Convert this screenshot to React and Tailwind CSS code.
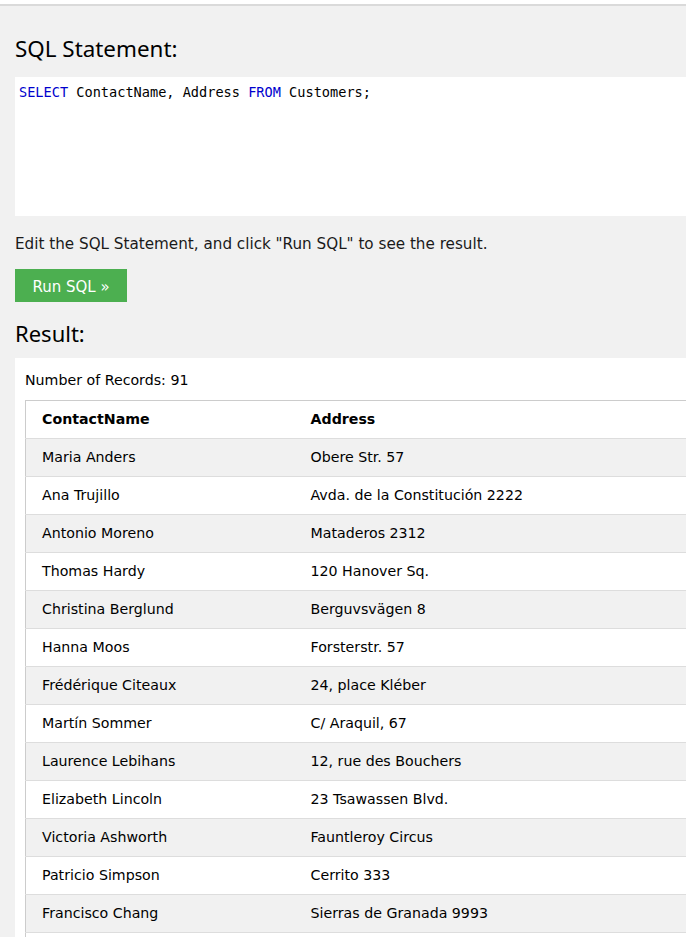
import React from "react";

const rows = [
    ["Maria Anders", "Obere Str. 57"],
    ["Ana Trujillo", "Avda. de la Constitución 2222"],
    ["Antonio Moreno", "Mataderos 2312"],
    ["Thomas Hardy", "120 Hanover Sq."],
    ["Christina Berglund", "Berguvsvägen 8"],
    ["Hanna Moos", "Forsterstr. 57"],
    ["Frédérique Citeaux", "24, place Kléber"],
    ["Martín Sommer", "C/ Araquil, 67"],
    ["Laurence Lebihans", "12, rue des Bouchers"],
    ["Elizabeth Lincoln", "23 Tsawassen Blvd."],
    ["Victoria Ashworth", "Fauntleroy Circus"],
    ["Patricio Simpson", "Cerrito 333"],
    ["Francisco Chang", "Sierras de Granada 9993"],
    ["Yang Wang", "Hauptstr. 29"],
];

const App = () => {
    return (
        <div className="w-full h-[937px] overflow-hidden bg-[#f1f1f1] text-black">
            <div className="h-[6px] bg-white border-b-2 border-[#dadada]"></div>

            <div className="pl-[15px]">
                <h2 className="pt-[26px] h-[71px] text-[22.4px] leading-[34px] font-['Noto_Sans',sans-serif]">SQL Statement:</h2>

                <div className="h-[139px] bg-white px-[4px] pt-[5px] font-['DejaVu_Sans_Mono',monospace] text-[13.6px] leading-[20px]">
                    <span className="text-[#0000cd]">SELECT</span> ContactName, Address <span className="text-[#0000cd]">FROM</span> Customers;
                </div>

                <p className="mt-[18px] text-[15.2px] leading-[20px] font-['DejaVu_Sans',sans-serif] text-[#1a1a1a]">
                    Edit the SQL Statement, and click "Run SQL" to see the result.
                </p>

                <button className="mt-[15px] w-[112px] h-[33px] pt-[3px] bg-[#4caf50] text-white text-[15px] font-['DejaVu_Sans',sans-serif]">
                    Run SQL »
                </button>

                <h2 className="mt-[14px] h-[42px] pt-[2px] text-[22px] leading-[30px] font-['Noto_Sans',sans-serif]">Result:</h2>

                <div className="bg-white pl-[10px] pt-[12px] font-['DejaVu_Sans',sans-serif] text-[14.2px]">
                    <p className="h-[30px] leading-[20px]">Number of Records: 91</p>
                    <table className="w-[700px] border-l border-t border-[#cccccc] border-collapse">
                        <thead>
                            <tr className="border-b border-[#dddddd] bg-white">
                                <th className="h-[38px] w-[285px] text-start font-bold pl-[16px]">ContactName</th>
                                <th className="h-[38px] text-start font-bold">Address</th>
                            </tr>
                        </thead>
                        <tbody>
                            {rows.map((row, i) => (
                                <tr className={`border-b border-[#dddddd] ${i % 2 === 0 ? "bg-[#f1f1f1]" : "bg-white"}`} key={row[0]}>
                                    <td className="h-[38px] pl-[16px]">{row[0]}</td>
                                    <td className="h-[38px]">{row[1]}</td>
                                </tr>
                            ))}
                        </tbody>
                    </table>
                </div>
            </div>
        </div>
    );
};

export default App;
